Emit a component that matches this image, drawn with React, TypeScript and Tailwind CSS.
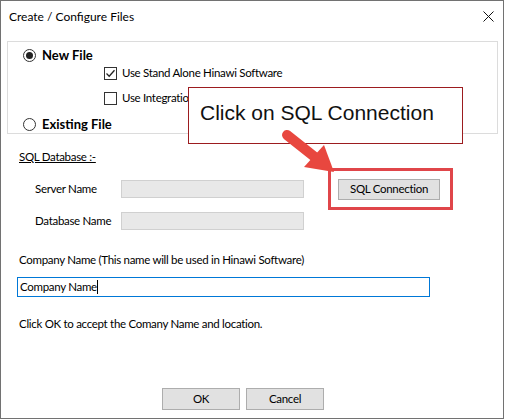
import React from "react";

const ui = "font-['Lato',sans-serif] text-[11.5px] tracking-[-0.3px] text-[#000] leading-[16px]";

function Radio({ checked }: { checked?: boolean }) {
  return (
    <span className="w-[13px] h-[13px] rounded-full border border-[#333] bg-white flex items-center justify-center shrink-0">
      {checked && <span className="w-[7px] h-[7px] rounded-full bg-[#222]" />}
    </span>
  );
}

function Check({ checked }: { checked?: boolean }) {
  return (
    <span className="w-[13px] h-[13px] border border-[#333] bg-white flex items-center justify-center shrink-0">
      {checked && (
        <svg width="11" height="11" viewBox="0 0 11 11">
          <path d="M1.5 5.5 L4.2 8.2 L9.5 2.2" fill="none" stroke="#222" strokeWidth="1.3" />
        </svg>
      )}
    </span>
  );
}

function WinButton({ children, className = "" }: { children: React.ReactNode; className?: string }) {
  return (
    <button
      className={`h-[21px] bg-[#e1e1e1] border border-[#adadad] flex items-center justify-center whitespace-nowrap ${className}`}
    >
      {children}
    </button>
  );
}

export default function App() {
  return (
    <div className={`w-[506px] h-[420px] bg-white relative ${ui}`}>
      <div className="w-[504px] h-[419px] border border-[#727272] flex flex-col relative">
        {/* Title bar */}
        <div className="h-[31px] flex items-center justify-between pl-[8px] pr-[9px]">
          <span className="text-[12px] tracking-normal">Create / Configure Files</span>
          <svg width="11" height="11" viewBox="0 0 11 11">
            <path d="M0.5 0.5 L10.5 10.5 M10.5 0.5 L0.5 10.5" stroke="#111" strokeWidth="1" />
          </svg>
        </div>

        {/* Group box */}
        <div className="ml-[6px] mt-[9px] w-[491px] h-[93px] border border-[#dcdcdc] pt-[4px]">
          <div className="h-[18px] flex items-center pl-[15px] gap-[6px]">
            <Radio checked />
            <span className="font-bold text-[13px] tracking-normal">New File</span>
          </div>
          <div className="h-[18px] flex items-center pl-[96px] gap-[5px]">
            <Check checked />
            <span>Use Stand Alone Hinawi Software</span>
          </div>
          <div className="h-[18px] mt-[7px] flex items-center pl-[96px] gap-[5px]">
            <Check />
            <span>Use Integration with QuickBooks</span>
          </div>
          <div className="h-[18px] mt-[8px] flex items-center pl-[15px] gap-[6px]">
            <Radio />
            <span className="font-bold text-[13px] tracking-normal">Existing File</span>
          </div>
        </div>

        {/* SQL database */}
        <div className="pl-[18px] mt-[15px] underline">SQL Database :-</div>
        <div className="mt-[15px] h-[18px] flex items-center whitespace-nowrap">
          <span className="w-[120px] pl-[34px]">Server Name</span>
          <span className="w-[183px] h-[18px] bg-[#e8e8e8] border border-[#d0d0d0]" />
          <WinButton className="ml-[34px] w-[102px] h-[20px]">SQL Connection</WinButton>
        </div>
        <div className="mt-[14px] h-[18px] flex items-center whitespace-nowrap">
          <span className="w-[120px] pl-[34px]">Database Name</span>
          <span className="w-[183px] h-[18px] bg-[#e8e8e8] border border-[#d0d0d0]" />
        </div>

        <div className="pl-[18px] mt-[22px]">Company Name (This name will be used in Hinawi Software)</div>
        <div className="ml-[16px] mt-[9px] w-[413px] h-[20px] border border-[#0078d7] flex items-center pl-[2px]">
          <span>Company Name</span>
          <span className="w-[1px] h-[14px] bg-black" />
        </div>

        <div className="pl-[18px] mt-[19px]">Click OK to accept the Comany Name and location.</div>

        <div className="mt-[56px] ml-[161px] flex gap-[6px]">
          <WinButton className="w-[78px] h-[22px]">OK</WinButton>
          <WinButton className="w-[78px] h-[22px]">Cancel</WinButton>
        </div>

        {/* Annotation: callout */}
        <div className="absolute left-[187px] top-[86px] w-[275px] h-[57px] bg-white border-[1.5px] border-[#9c1c1f] pl-[11px] pt-[13px]">
          <span className="font-['Liberation_Sans',Arial,sans-serif] text-[21px] leading-[24px] tracking-normal text-[#111]">
            Click on SQL Connection
          </span>
        </div>

        {/* Annotation: highlight box */}
        <div className="absolute left-[327px] top-[167px] w-[125px] h-[42px] border-[3px] border-[#e0464a]" />

        {/* Annotation: arrow */}
        <svg className="absolute left-[269px] top-[124px]" width="80" height="60" viewBox="269 124 80 60">
          <line x1="286" y1="134" x2="315" y2="157" stroke="#e8473f" strokeWidth="10" strokeLinecap="round" />
          <polygon points="333,171 303,166 323,144" fill="#e8473f" />
        </svg>
      </div>
    </div>
  );
}
